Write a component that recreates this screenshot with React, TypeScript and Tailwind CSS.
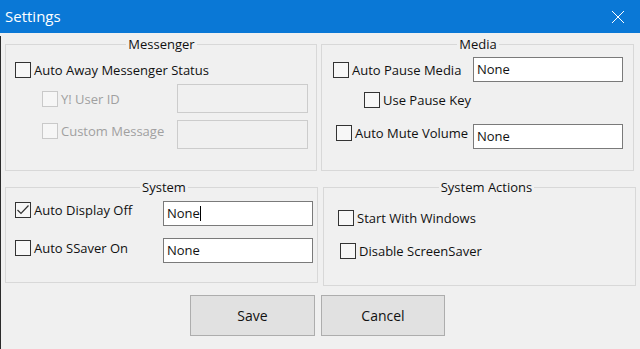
const Check = ({ checked = false, disabled = false }: { checked?: boolean; disabled?: boolean }) => (
  <span
    className={`flex h-4 w-4 shrink-0 items-center justify-center border ${
      disabled ? "border-[#c9c9c9] bg-[#f6f6f6]" : "border-[#333333] bg-[#f7f7f7]"
    }`}
  >
    {checked && (
      <svg width="14" height="14" viewBox="0 0 14 14" fill="none">
        <polyline points="1.5,7 5,10.5 12.5,2.5" stroke="#333" strokeWidth="1.2" />
      </svg>
    )}
  </span>
);

const Label = ({
  text,
  checked,
  disabled,
}: {
  text: string;
  checked?: boolean;
  disabled?: boolean;
}) => (
  <div className="flex items-center gap-[3px]">
    <Check checked={checked} disabled={disabled} />
    <span className={`leading-4 ${disabled ? "text-[#a0a0a0]" : "text-[#111]"}`}>{text}</span>
  </div>
);

const TextBox = ({ value = "", caret = false, w, h }: { value?: string; caret?: boolean; w: string; h: string }) => (
  <div className={`flex items-center border border-[#7a7a7a] bg-white pl-[3px] ${w} ${h}`}>
    <span>{value}</span>
    {caret && <span className="h-[15px] w-px bg-black" />}
  </div>
);

export default function App() {
  return (
    <div className="h-[349px] w-[640px] overflow-hidden bg-[#f0f0f0] font-['Open_Sans',sans-serif] text-[13px] text-[#111]">
      <div className="flex h-[33px] items-center justify-between bg-[#0a78d6] pl-[5px] pr-[15px] text-white">
        <span className="text-[15px]">Settings</span>
        <svg width="14" height="14" viewBox="0 0 14 14" fill="none">
          <path d="M1 1 L13 13 M13 1 L1 13" stroke="white" strokeWidth="1" />
        </svg>
      </div>
      <div className="h-[316px] border-b-2 border-l border-[#2b2b2b] pl-[4px]">
        <div className="mt-[3px] flex items-start gap-[4px]">
          <fieldset className="h-[135px] w-[312px] border border-[#d8d8d8] pl-[9px] pr-[8px]">
            <legend className="mx-auto px-[2px] leading-4">Messenger</legend>
            <div className="pt-[10px]">
              <Label text="Auto Away Messenger Status" />
            </div>
            <div className="mt-[6px] flex h-[29px] items-center justify-between pl-[27px]">
              <Label text="Y! User ID" disabled />
              <div className="h-[29px] w-[131px] border border-[#cccccc] bg-[#f0f0f0]" />
            </div>
            <div className="mt-[7px] flex h-[29px] items-start justify-between pl-[27px]">
              <div className="mt-[3px]">
                <Label text="Custom Message" disabled />
              </div>
              <div className="h-[29px] w-[131px] border border-[#cccccc] bg-[#f0f0f0]" />
            </div>
          </fieldset>
          <fieldset className="h-[135px] w-[313px] border border-[#d8d8d8] pl-[11px] pr-[10px]">
            <legend className="mx-auto px-[2px] leading-4">Media</legend>
            <div className="mt-[5px] flex h-[25px] items-center justify-between">
              <Label text="Auto Pause Media" />
              <TextBox value="None" w="w-[150px]" h="h-[25px]" />
            </div>
            <div className="mt-[10px] pl-[31px]">
              <Label text="Use Pause Key" />
            </div>
            <div className="mt-[16px] flex items-start justify-between">
              <div className="mt-[1px] pl-[3px]">
                <Label text="Auto Mute Volume" />
              </div>
              <TextBox value="None" w="w-[150px]" h="h-[25px]" />
            </div>
          </fieldset>
        </div>
        <div className="mt-[8px] flex items-start gap-[5px]">
          <fieldset className="h-[104px] w-[313px] border border-[#d8d8d8] pl-[9px] pr-[4px]">
            <legend className="mx-auto px-[2px] leading-4">System</legend>
            <div className="mt-[6px] flex items-start justify-between">
              <div className="mt-[1px]">
                <Label text="Auto Display Off" checked />
              </div>
              <TextBox value="None" caret w="w-[150px]" h="h-[25px]" />
            </div>
            <div className="mt-[12px] flex items-start justify-between">
              <div className="mt-[2px]">
                <Label text="Auto SSaver On" />
              </div>
              <TextBox value="None" w="w-[150px]" h="h-[25px]" />
            </div>
          </fieldset>
          <fieldset className="h-[107px] w-[313px] border border-[#d8d8d8] pl-[14px]">
            <legend className="mx-auto px-[2px] leading-4">System Actions</legend>
            <div className="mt-[15px]">
              <Label text="Start With Windows" />
            </div>
            <div className="mt-[17px] pl-[2px]">
              <Label text="Disable ScreenSaver" />
            </div>
          </fieldset>
        </div>
        <div className="mt-[9px] flex gap-[6px] pl-[185px]">
          <button className="h-[41px] w-[125px] border border-[#adadad] bg-[#e1e1e1] text-[14px]">Save</button>
          <button className="h-[41px] w-[124px] border border-[#adadad] bg-[#e1e1e1] text-[14px]">Cancel</button>
        </div>
      </div>
    </div>
  );
}
